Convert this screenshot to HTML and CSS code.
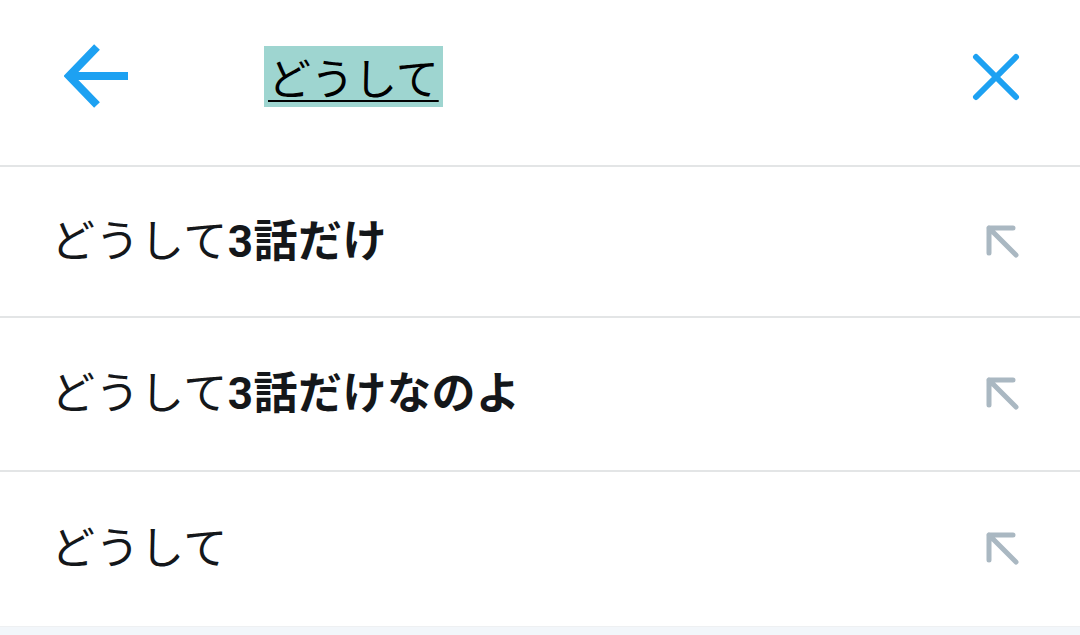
FILE: index.html
```html
<!DOCTYPE html>
<html>
	<head>
		<meta charset="UTF-8">
		<title></title>
		<link rel="stylesheet" href="styles.css">
	</head>
	<body>
		<div id="box">
			<div id="header">
				<svg class="back" width="66" height="66" viewBox="0 0 66 66">
					<path d="M33 3 L5 32 L33 61 M5 32 L64 32" fill="none" stroke="#1da1f2" stroke-width="8" stroke-linecap="butt" stroke-linejoin="miter"/>
				</svg>
				<div class="query"><span>どうして</span></div>
				<svg class="close" width="48" height="48" viewBox="0 0 48 48">
					<path d="M4 4 L44 44 M44 4 L4 44" fill="none" stroke="#1da1f2" stroke-width="6" stroke-linecap="round"/>
				</svg>
			</div>
			<ul id="list">
				<li>
					<span class="text">どうして<b>3話だけ</b></span>
					<svg class="fill" width="36" height="36" viewBox="0 0 36 36"><path d="M5 30 L5 5 L29 5 M5 5 L32 32" fill="none" stroke="#aab8c2" stroke-width="5" stroke-linecap="round" stroke-linejoin="round"/></svg>
				</li>
				<li>
					<span class="text">どうして<b>3話だけなのよ</b></span>
					<svg class="fill" width="36" height="36" viewBox="0 0 36 36"><path d="M5 30 L5 5 L29 5 M5 5 L32 32" fill="none" stroke="#aab8c2" stroke-width="5" stroke-linecap="round" stroke-linejoin="round"/></svg>
				</li>
				<li>
					<span class="text">どうして</span>
					<svg class="fill" width="36" height="36" viewBox="0 0 36 36"><path d="M5 30 L5 5 L29 5 M5 5 L32 32" fill="none" stroke="#aab8c2" stroke-width="5" stroke-linecap="round" stroke-linejoin="round"/></svg>
				</li>
			</ul>
			<div id="footer"></div>
		</div>
	</body>
</html>
```
FILE: styles.css
```css
* {margin: 0; padding: 0; border: none;}
ul, li {list-style: none;}
html, body {
	background: #fff;
	font-family: "Noto Sans CJK JP", "Noto Sans", sans-serif;
	color: #14171a;
}
#box {
	width: 1080px;
	height: 635px;
	display: flex;
	flex-direction: column;
	overflow: hidden;
}
#header {
	height: 165px;
	border-bottom: 2px solid #e3e5e6;
	display: flex;
	align-items: center;
	padding: 0 60px 0 64px;
}
#header .back {
	margin-top: -12px;
}
#header .query {
	flex: 1;
	margin-left: 134px;
	margin-top: -12px;
}
#header .query span {
	display: inline-block;
	background: #9ed5d0;
	font-size: 43px;
	line-height: 61px;
	height: 61px;
	padding: 0 4px;
	text-decoration: underline;
	text-decoration-thickness: 2px;
	text-underline-offset: 5px;
	color: #000;
}
#header .close {
	margin-top: -12px;
}
#list li {
	border-bottom: 2px solid #e3e5e6;
	display: flex;
	align-items: center;
	padding: 0 60px 0 51px;
}
#list li:nth-child(1) {
	height: 149px;
}
#list li:nth-child(2) {
	height: 152px;
}
#list li:nth-child(3) {
	height: 154px;
	border-bottom: none;
}
#list li .text {
	flex: 1;
	font-family: Roboto, "Noto Sans CJK JP", sans-serif;
	font-size: 44px;
	letter-spacing: 0.5px;
	margin-top: -8px;
}
#list li .text b {
	font-weight: 700;
}
#list li .fill {
	margin-top: -2px;
}
#footer {
	flex: 1;
	background: #f2f6fa;
	border-top: 1px solid #eef0f2;
}
```
